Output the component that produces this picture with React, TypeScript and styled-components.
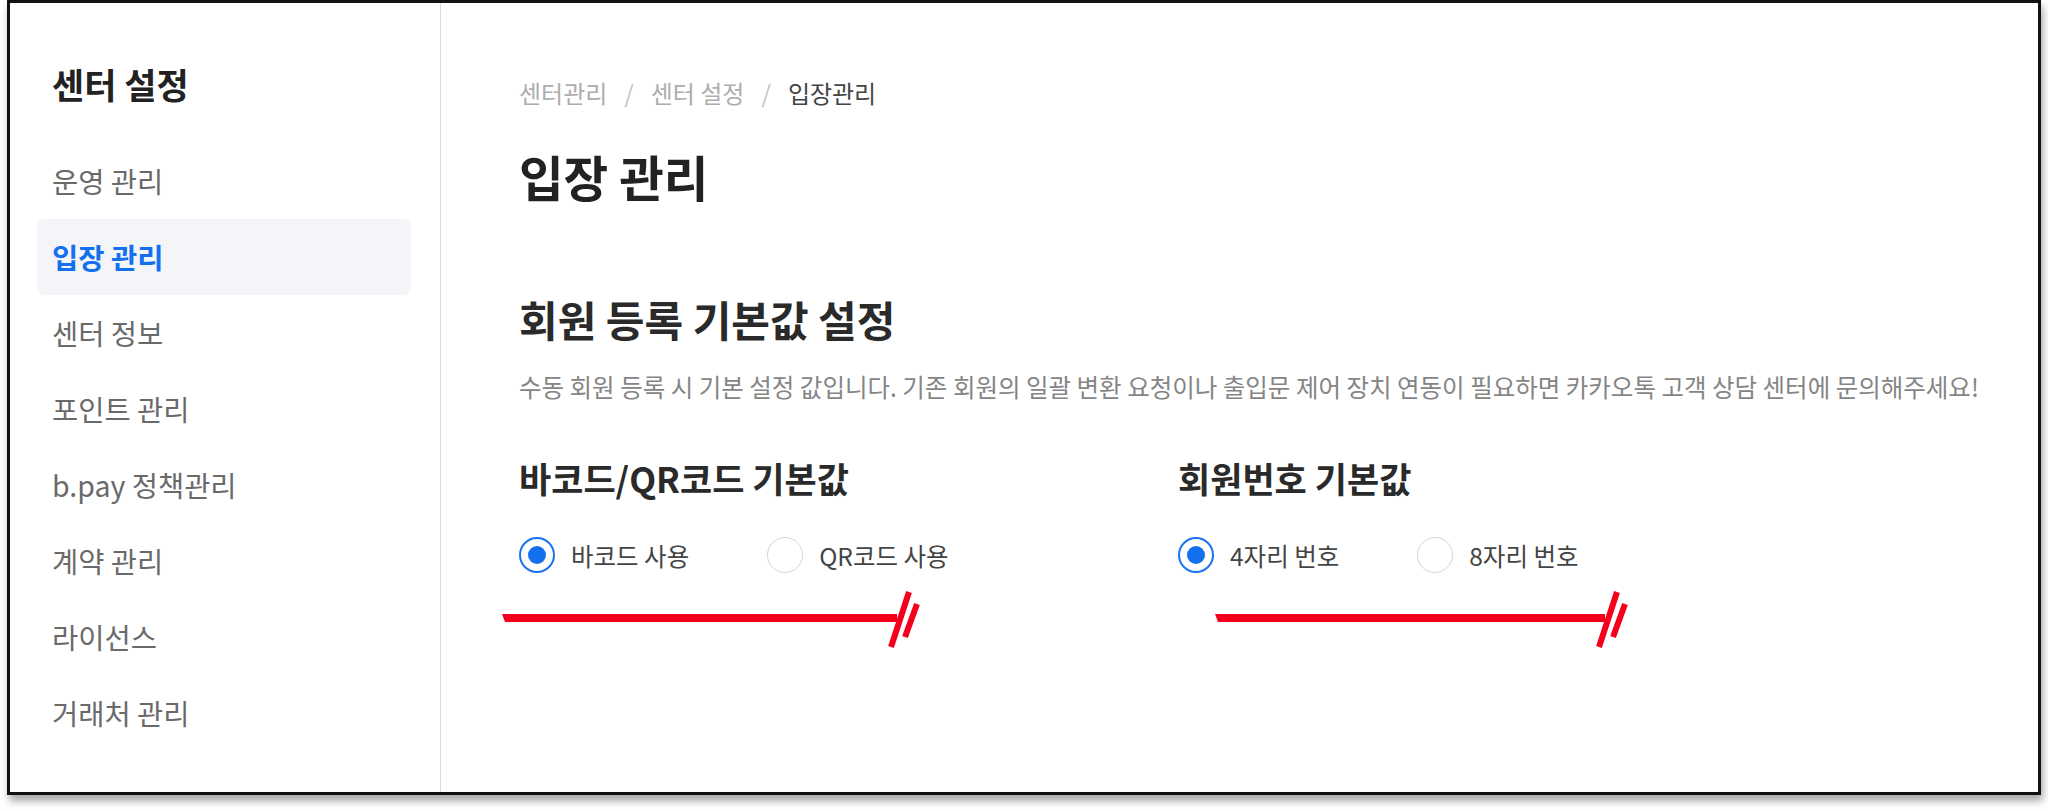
import React from "react";
import styled, { createGlobalStyle } from "styled-components";

const GlobalStyle = createGlobalStyle`
  html, body { margin: 0; padding: 0; background: #fff; }
  body {
    font-family: "Noto Sans CJK KR", "Noto Sans", sans-serif;
    color: #222;
    -webkit-font-smoothing: antialiased;
  }
  * { box-sizing: border-box; }
`;

const Page = styled.div`
  width: 2048px;
  height: 811px;
  padding-left: 7px;
  overflow: hidden;
`;

const Frame = styled.div`
  width: 2034px;
  height: 795px;
  border: 3px solid #111;
  box-shadow: 2px 6px 8px rgba(0, 0, 0, 0.35);
  background: #fff;
  display: flex;
`;

const Sidebar = styled.aside`
  width: 431px;
  flex: none;
  border-right: 1px solid #dcdcdc;
  padding: 59px 29px 0 27px;
`;

const SidebarTitle = styled.h2`
  margin: 0 0 37px;
  padding-left: 15px;
  font-size: 35px;
  line-height: 44px;
  font-weight: 700;
  color: #222;
`;

const Menu = styled.ul`
  list-style: none;
  margin: 0;
  padding: 0;
`;

const MenuItem = styled.li<{ $active?: boolean }>`
  height: 76px;
  line-height: 76px;
  padding: 0 15px;
  border-radius: 8px;
  font-size: 28.5px;
  font-weight: ${(p) => (p.$active ? 700 : 400)};
  color: ${(p) => (p.$active ? "#1570ef" : "#6a6a6a")};
  background: ${(p) => (p.$active ? "#f3f5f8" : "transparent")};
`;

const Content = styled.main`
  flex: 1;
  padding: 74px 0 0 78px;
`;

const Breadcrumb = styled.nav`
  font-size: 24px;
  line-height: 32px;
  color: #adadad;
`;

const Sep = styled.span`
  margin: 0 17px;
  color: #c4c4c4;
`;

const Current = styled.span`
  color: #444;
`;

const PageTitle = styled.h1`
  margin: 39px 0 0;
  font-size: 48.5px;
  line-height: 56px;
  font-weight: 700;
  color: #222;
`;

const SectionTitle = styled.h2`
  margin: 90px 0 0;
  font-size: 42px;
  line-height: 50px;
  font-weight: 700;
  color: #2a2a2a;
`;

const Description = styled.p`
  margin: 27px 0 0;
  font-size: 24.5px;
  line-height: 32px;
  color: #858585;
  white-space: nowrap;
`;

const Columns = styled.div`
  margin-top: 53px;
  display: grid;
  grid-template-columns: 659px 1fr;
`;

const Column = styled.section`
  display: flex;
  flex-direction: column;
  align-items: flex-start;
`;

const SubTitle = styled.h3`
  margin: 0;
  font-size: 35px;
  line-height: 44px;
  font-weight: 700;
  color: #2a2a2a;
`;

const RadioGroup = styled.div`
  margin-top: 37px;
  display: flex;
  gap: 78px;
`;

const RadioOption = styled.label`
  display: flex;
  align-items: center;
  gap: 16px;
  height: 36px;
  font-size: 24.5px;
  color: #444;
`;

const RadioCircle = styled.span<{ $checked?: boolean }>`
  width: 36px;
  height: 36px;
  flex: none;
  border-radius: 50%;
  border: ${(p) => (p.$checked ? "2px solid #1a73ef" : "1.5px solid #d4d4d4")};
  display: flex;
  align-items: center;
  justify-content: center;
  background: #fff;
`;

const RadioDot = styled.span`
  width: 18px;
  height: 18px;
  border-radius: 50%;
  background: #1570ef;
`;

const BreakMark = styled.svg<{ $offset: number }>`
  display: block;
  margin-top: 17px;
  margin-left: ${(p) => p.$offset}px;
  overflow: visible;
`;

type Option = { label: string; checked?: boolean };

const columns: { title: string; options: Option[]; offset: number; length: number }[] = [
  {
    title: "바코드/QR코드 기본값",
    options: [{ label: "바코드 사용", checked: true }, { label: "QR코드 사용" }],
    offset: -19,
    length: 397,
  },
  {
    title: "회원번호 기본값",
    options: [{ label: "4자리 번호", checked: true }, { label: "8자리 번호" }],
    offset: 35,
    length: 392,
  },
];

const menu = [
  "운영 관리",
  "입장 관리",
  "센터 정보",
  "포인트 관리",
  "b.pay 정책관리",
  "계약 관리",
  "라이선스",
  "거래처 관리",
];

function Annotation({ offset, length }: { offset: number; length: number }) {
  const red = "#f4001c";
  return (
    <BreakMark $offset={offset} width={length + 26} height={60} viewBox={`0 0 ${length + 26} 60`}>
      <polygon points={`2,24 ${length},24 ${length},32 5,32`} fill={red} />
      <line x1={length + 12} y1={2} x2={length - 6} y2={57} stroke={red} strokeWidth={6} />
      <line x1={length + 20} y1={14} x2={length + 8} y2={47} stroke={red} strokeWidth={6} />
    </BreakMark>
  );
}

export default function App() {
  return (
    <>
      <GlobalStyle />
      <Page>
        <Frame>
          <Sidebar>
            <SidebarTitle>센터 설정</SidebarTitle>
            <Menu>
              {menu.map((m) => (
                <MenuItem key={m} $active={m === "입장 관리"}>
                  {m}
                </MenuItem>
              ))}
            </Menu>
          </Sidebar>
          <Content>
            <Breadcrumb>
              센터관리<Sep>/</Sep>센터 설정<Sep>/</Sep>
              <Current>입장관리</Current>
            </Breadcrumb>
            <PageTitle>입장 관리</PageTitle>
            <SectionTitle>회원 등록 기본값 설정</SectionTitle>
            <Description>
              수동 회원 등록 시 기본 설정 값입니다. 기존 회원의 일괄 변환 요청이나 출입문 제어 장치 연동이 필요하면
              카카오톡 고객 상담 센터에 문의해주세요!
            </Description>
            <Columns>
              {columns.map((c) => (
                <Column key={c.title}>
                  <SubTitle>{c.title}</SubTitle>
                  <RadioGroup>
                    {c.options.map((o) => (
                      <RadioOption key={o.label}>
                        <RadioCircle $checked={o.checked}>{o.checked && <RadioDot />}</RadioCircle>
                        {o.label}
                      </RadioOption>
                    ))}
                  </RadioGroup>
                  <Annotation offset={c.offset} length={c.length} />
                </Column>
              ))}
            </Columns>
          </Content>
        </Frame>
      </Page>
    </>
  );
}
